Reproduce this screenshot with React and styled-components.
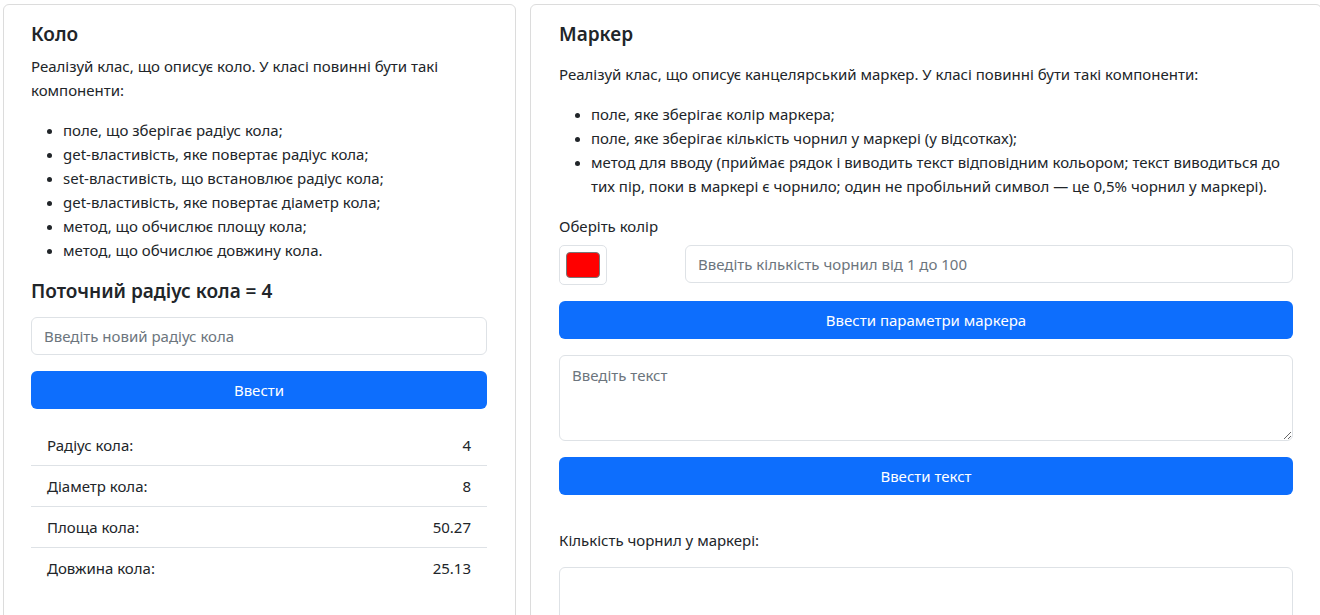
import React from "react";
import styled, { createGlobalStyle } from "styled-components";

const GlobalStyle = createGlobalStyle`
  html, body {
    margin: 0;
    overflow: hidden;
    background: #fff;
  }
  body {
    font-family: "Noto Sans", "Open Sans", sans-serif;
    font-size: 15px;
    line-height: 24px;
    color: #212529;
  }
  * { box-sizing: border-box; }
`;

const Page = styled.div`
  display: flex;
  align-items: flex-start;
  gap: 14px;
  padding: 4px 0 0 3px;
  width: 1340px;
`;

const Card = styled.section`
  flex: 0 0 ${(p) => p.$w}px;
  min-height: 630px;
  border: 1px solid #dcdcdc;
  border-radius: 6px;
  padding: ${(p) => p.$pad};
  display: flex;
  flex-direction: column;
`;

const Title = styled.h5`
  margin: 0 0 ${(p) => p.$mb}px;
  font-size: 19px;
  font-weight: 600;
  line-height: 24px;
`;

const Para = styled.p`
  margin: 0 0 16px;
`;

const List = styled.ul`
  margin: 0 0 16px;
  padding-left: 32px;
  li::marker {
    font-size: 13px;
  }
`;

const SubTitle = styled.h5`
  margin: 1px 0 14px;
  font-size: 19px;
  font-weight: 600;
  line-height: 24px;
`;

const Input = styled.input`
  display: block;
  width: 100%;
  height: 38px;
  padding: 6px 12px;
  border: 1px solid #dee2e6;
  border-radius: 6px;
  font-family: inherit;
  font-size: 15px;
  color: #212529;
  background: #fff;
  outline: none;
  margin: 0 0 ${(p) => p.$mb || 0}px;
  &::placeholder {
    color: #6c757d;
  }
`;

const Button = styled.button`
  display: block;
  width: 100%;
  height: 38px;
  border: none;
  border-radius: 6px;
  background: #0d6efd;
  color: #fff;
  font-family: inherit;
  font-size: 15px;
  margin: 0 0 ${(p) => p.$mb || 0}px;
  cursor: pointer;
`;

const Table = styled.div`
  display: flex;
  flex-direction: column;
`;

const Row = styled.div`
  display: flex;
  justify-content: space-between;
  padding: 8px 16px;
  line-height: 24px;
  border-bottom: 1px solid ${(p) => (p.$last ? "transparent" : "#dee2e6")};
`;

const Label = styled.div`
  margin: 0 0 ${(p) => p.$mb}px;
`;

const ColorRow = styled.div`
  display: grid;
  grid-template-columns: 126px 1fr;
  align-items: start;
  margin-bottom: 16px;
`;

const ColorPicker = styled.div`
  width: 48px;
  height: 40px;
  border: 1px solid #dee2e6;
  border-radius: 5px;
  padding: 6px;
  display: flex;
`;

const Swatch = styled.span`
  flex: 1;
  background: ${(p) => p.$color};
  border: 1px solid #777;
  border-radius: 4px;
`;

const TextArea = styled.textarea`
  display: block;
  width: 100%;
  height: 86px;
  padding: 7px 12px;
  border: 1px solid #dee2e6;
  border-radius: 6px;
  font-family: inherit;
  font-size: 15px;
  line-height: 24px;
  color: #212529;
  resize: vertical;
  outline: none;
  margin-bottom: 16px;
  &::placeholder {
    color: #6c757d;
  }
`;

const OutputBox = styled.div`
  height: 80px;
  border: 1px solid #dee2e6;
  border-radius: 6px;
`;

const circleRows = [
  ["Радіус кола:", "4"],
  ["Діаметр кола:", "8"],
  ["Площа кола:", "50.27"],
  ["Довжина кола:", "25.13"],
];

export default function App() {
  return (
    <>
      <GlobalStyle />
      <Page>
        <Card $w={513} $pad="17px 28px 17px 27px">
          <Title $mb={8}>Коло</Title>
          <Para>Реалізуй клас, що описує коло. У класі повинні бути такі компоненти:</Para>
          <List>
            <li>поле, що зберігає радіус кола;</li>
            <li>get-властивість, яке повертає радіус кола;</li>
            <li>set-властивість, що встановлює радіус кола;</li>
            <li>get-властивість, яке повертає діаметр кола;</li>
            <li>метод, що обчислює площу кола;</li>
            <li>метод, що обчислює довжину кола.</li>
          </List>
          <SubTitle>Поточний радіус кола = 4</SubTitle>
          <Input placeholder="Введіть новий радіус кола" $mb={16} />
          <Button $mb={16}>Ввести</Button>
          <Table>
            {circleRows.map(([k, v], i) => (
              <Row key={k} $last={i === circleRows.length - 1}>
                <span>{k}</span>
                <span>{v}</span>
              </Row>
            ))}
          </Table>
        </Card>
        <Card $w={792} $pad="17px 28px">
          <Title $mb={16}>Маркер</Title>
          <Para>Реалізуй клас, що описує канцелярський маркер. У класі повинні бути такі компоненти:</Para>
          <List>
            <li>поле, яке зберігає колір маркера;</li>
            <li>поле, яке зберігає кількість чорнил у маркері (у відсотках);</li>
            <li>
              метод для вводу (приймає рядок і виводить текст відповідним кольором; текст виводиться до тих пір,
              поки в маркері є чорнило; один не пробільний символ — це 0,5% чорнил у маркері).
            </li>
          </List>
          <Label $mb={7}>Оберіть колір</Label>
          <ColorRow>
            <ColorPicker>
              <Swatch $color="#ff0000" />
            </ColorPicker>
            <Input placeholder="Введіть кількість чорнил від 1 до 100" />
          </ColorRow>
          <Button $mb={16}>Ввести параметри маркера</Button>
          <TextArea placeholder="Введіть текст" />
          <Button $mb={33}>Ввести текст</Button>
          <Label $mb={15}>Кількість чорнил у маркері:</Label>
          <OutputBox />
        </Card>
      </Page>
    </>
  );
}
